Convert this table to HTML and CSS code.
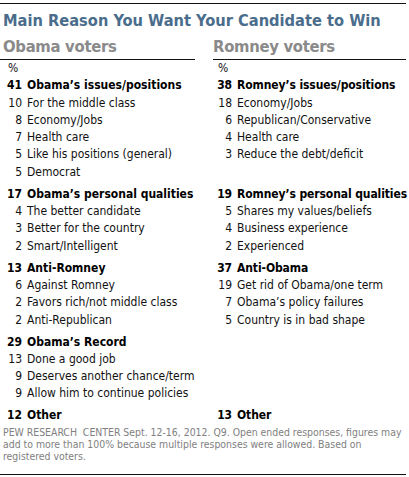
FILE: index.html
```html
<!DOCTYPE html>
<html lang="en">
<head>
  <meta charset="UTF-8" />
  <title>Main Reason You Want Your Candidate to Win</title>
  <meta name="viewport" content="width=device-width, initial-scale=1" />
  <link rel="stylesheet" href="styles.css">
</head>
<body>
  <div class="chart">
    <h1>Main Reason You Want Your Candidate to Win</h1>

    <div class="pair heads">
      <h2 class="obama">Obama voters</h2>
      <h2>Romney voters</h2>
    </div>

    <div class="pair">
      <div class="col">
        <div class="row pct"><span class="num">%</span></div>
      </div>
      <div class="col rom">
        <div class="row pct"><span class="num">%</span></div>
      </div>
    </div>

    <div class="pair first">
      <div class="col">
        <div class="row main"><span class="num">41</span><span>Obama’s issues/positions</span></div>
        <div class="row"><span class="num">10</span><span>For the middle class</span></div>
        <div class="row"><span class="num">8</span><span>Economy/Jobs</span></div>
        <div class="row"><span class="num">7</span><span>Health care</span></div>
        <div class="row"><span class="num">5</span><span>Like his positions (general)</span></div>
        <div class="row"><span class="num">5</span><span>Democrat</span></div>
      </div>
      <div class="col rom">
        <div class="row main"><span class="num">38</span><span>Romney’s issues/positions</span></div>
        <div class="row"><span class="num">18</span><span>Economy/Jobs</span></div>
        <div class="row"><span class="num">6</span><span>Republican/Conservative</span></div>
        <div class="row"><span class="num">4</span><span>Health care</span></div>
        <div class="row"><span class="num">3</span><span>Reduce the debt/deficit</span></div>
      </div>
    </div>

    <div class="pair">
      <div class="col">
        <div class="row main"><span class="num">17</span><span>Obama’s personal qualities</span></div>
        <div class="row"><span class="num">4</span><span>The better candidate</span></div>
        <div class="row"><span class="num">3</span><span>Better for the country</span></div>
        <div class="row"><span class="num">2</span><span>Smart/Intelligent</span></div>
      </div>
      <div class="col rom">
        <div class="row main"><span class="num">19</span><span>Romney’s personal qualities</span></div>
        <div class="row"><span class="num">5</span><span>Shares my values/beliefs</span></div>
        <div class="row"><span class="num">4</span><span>Business experience</span></div>
        <div class="row"><span class="num">2</span><span>Experienced</span></div>
      </div>
    </div>

    <div class="pair">
      <div class="col">
        <div class="row main"><span class="num">13</span><span>Anti-Romney</span></div>
        <div class="row"><span class="num">6</span><span>Against Romney</span></div>
        <div class="row"><span class="num">2</span><span>Favors rich/not middle class</span></div>
        <div class="row"><span class="num">2</span><span>Anti-Republican</span></div>
      </div>
      <div class="col rom">
        <div class="row main"><span class="num">37</span><span>Anti-Obama</span></div>
        <div class="row"><span class="num">19</span><span>Get rid of Obama/one term</span></div>
        <div class="row"><span class="num">7</span><span>Obama’s policy failures</span></div>
        <div class="row"><span class="num">5</span><span>Country is in bad shape</span></div>
      </div>
    </div>

    <div class="pair">
      <div class="col">
        <div class="row main"><span class="num">29</span><span>Obama’s Record</span></div>
        <div class="row"><span class="num">13</span><span>Done a good job</span></div>
        <div class="row"><span class="num">9</span><span>Deserves another chance/term</span></div>
        <div class="row"><span class="num">9</span><span>Allow him to continue policies</span></div>
      </div>
      <div class="col rom"></div>
    </div>

    <div class="pair">
      <div class="col">
        <div class="row main"><span class="num">12</span><span>Other</span></div>
      </div>
      <div class="col rom">
        <div class="row main"><span class="num">13</span><span>Other</span></div>
      </div>
    </div>

    <p class="note">PEW RESEARCH&nbsp; CENTER Sept. 12-16, 2012. Q9. Open ended responses, figures may<br>add to more than 100% because multiple responses were allowed. Based on<br>registered voters.</p>
  </div>
</body>
</html>
```

FILE: styles.css
```css
body {
  margin: 0;
  background: #fff;
  font-family: 'DejaVu Sans', Tahoma, sans-serif;
  font-stretch: condensed;
  color: #111;
}

.chart {
  width: 406px;
  border-top: 1px solid #111;
  margin-top: 3px;
}

h1 {
  margin: 0;
  padding: 7px 0 0 3px;
  font-size: 16.3px;
  line-height: 20px;
  color: #4a6d8c;
  font-weight: 700;
}

.pair {
  display: grid;
  grid-template-columns: 195px 193px;
  column-gap: 18px;
}

.pair + .pair {
  margin-top: 4.7px;
}

.heads {
  margin-top: 6px;
}

h2 {
  margin: 0;
  font-size: 16.5px;
  line-height: 20px;
  letter-spacing: -0.3px;
  color: #8a8a8a;
  font-weight: 700;
  border-bottom: 1px solid #111;
  padding-bottom: 2px;
}

h2.obama {
  padding-left: 3px;
}

.heads + .pair,
.pair.first {
  margin-top: 0;
}

.row {
  display: flex;
  gap: 5px;
  font-size: 12px;
  line-height: 17.3px;
  white-space: nowrap;
}

.row .num {
  width: 20px;
  padding-left: 2px;
  text-align: right;
  flex: none;
}

.rom .row .num {
  width: 17px;
}

.row.pct .num {
  text-align: left;
  padding-left: 8px;
}

.rom .row.pct .num {
  padding-left: 5px;
}

.row.main {
  font-weight: 700;
  color: #000;
}

.rom .row.main {
  letter-spacing: -0.1px;
}

.note {
  margin: 1px 0 0;
  padding: 0 0 12px 3px;
  font-size: 10.4px;
  line-height: 12px;
  white-space: nowrap;
  color: #808080;
  border-bottom: 1px solid #111;
}
```
